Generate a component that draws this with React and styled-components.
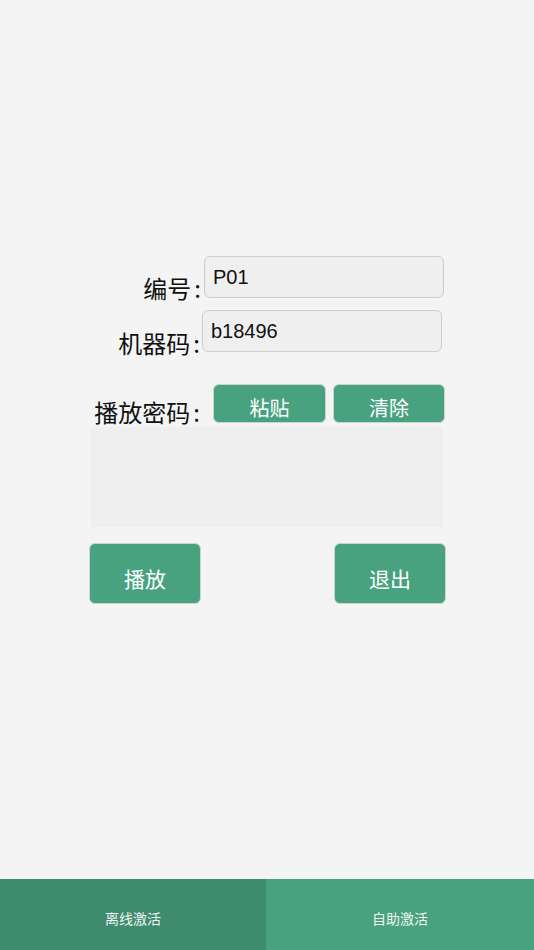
import React from "react";
import styled, { createGlobalStyle } from "styled-components";

const Global = createGlobalStyle`
  html, body { margin: 0; padding: 0; background: #f4f4f4; }
  body { font-family: "Liberation Sans", "Noto Sans CJK SC", sans-serif; }
  * { box-sizing: border-box; }
`;

const Page = styled.div`
  display: flex;
  flex-direction: column;
  height: 100vh;
  background: #f4f4f4;
`;

const Main = styled.div`
  flex: 1;
  display: flex;
  flex-direction: column;
  padding-top: 256px;
`;

const Row = styled.div`
  display: flex;
  align-items: flex-end;
  margin-top: ${(p) => p.$mt || 0}px;
`;

const Label = styled.div`
  width: ${(p) => p.$w}px;
  flex: none;
  text-align: right;
  font-family: "Noto Sans CJK SC", sans-serif;
  font-size: 24px;
  line-height: 24px;
  color: #111;
  margin-bottom: ${(p) => -(p.$drop || 0)}px;
  position: relative;
  z-index: 1;
`;

const Colon = styled.span`
  margin-left: 3px;
`;

const Field = styled.div`
  width: 240px;
  height: 42px;
  margin-left: ${(p) => p.$ml}px;
  background: #efefef;
  border: 1px solid #cdcdcd;
  border-radius: 6px;
  display: flex;
  align-items: center;
  padding-left: 8px;
  font-family: "Liberation Sans", "Noto Sans CJK SC", sans-serif;
  font-size: 20px;
  color: #111;
`;

const SmallButton = styled.button`
  width: ${(p) => p.$w}px;
  height: 39px;
  margin-left: ${(p) => p.$ml}px;
  background: #48a27f;
  border: 1px solid #cdd3d0;
  border-radius: 6px;
  color: #fff;
  font-family: "Noto Sans CJK SC", sans-serif;
  font-size: 20px;
  line-height: 20px;
  padding: 8px 0 0;
  display: flex;
  align-items: center;
  justify-content: center;
`;

const TextArea = styled.div`
  margin: 4px 0 0 91px;
  width: 352px;
  height: 100px;
  background: #efefef;
`;

const Actions = styled.div`
  display: flex;
  justify-content: space-between;
  margin: 16px 0 0 89px;
  width: 357px;
`;

const BigButton = styled.button`
  width: 112px;
  height: 61px;
  background: #48a27f;
  border: 1px solid #cdd3d0;
  border-radius: 6px;
  color: #fff;
  font-family: "Noto Sans CJK SC", sans-serif;
  font-size: 21px;
  line-height: 21px;
  padding: 9px 0 0;
  display: flex;
  align-items: center;
  justify-content: center;
`;

const TabBar = styled.div`
  height: 71px;
  display: flex;
  flex: none;
`;

const Tab = styled.div`
  flex: ${(p) => (p.$left ? "0 0 266px" : "1")};
  background: ${(p) => (p.$active ? "#3f8b6e" : "#48a27f")};
  color: #eef4f1;
  font-family: "Noto Sans CJK SC", sans-serif;
  font-size: 14px;
  display: flex;
  align-items: center;
  justify-content: center;
  padding-top: 6px;
`;

export default function App() {
  return (
    <>
      <Global />
      <Page>
        <Main>
          <Row>
            <Label $w={201} $drop={2}>编号<Colon>:</Colon></Label>
            <Field $ml={3}>P01</Field>
          </Row>
          <Row $mt={12}>
            <Label $w={200} $drop={3}>机器码<Colon>:</Colon></Label>
            <Field $ml={2}>b18496</Field>
          </Row>
          <Row $mt={32}>
            <Label $w={200} $drop={1}>播放密码<Colon>:</Colon></Label>
            <SmallButton $w={113} $ml={13}>粘贴</SmallButton>
            <SmallButton $w={112} $ml={7}>清除</SmallButton>
          </Row>
          <TextArea />
          <Actions>
            <BigButton>播放</BigButton>
            <BigButton>退出</BigButton>
          </Actions>
        </Main>
        <TabBar>
          <Tab $left $active>离线激活</Tab>
          <Tab>自助激活</Tab>
        </TabBar>
      </Page>
    </>
  );
}
